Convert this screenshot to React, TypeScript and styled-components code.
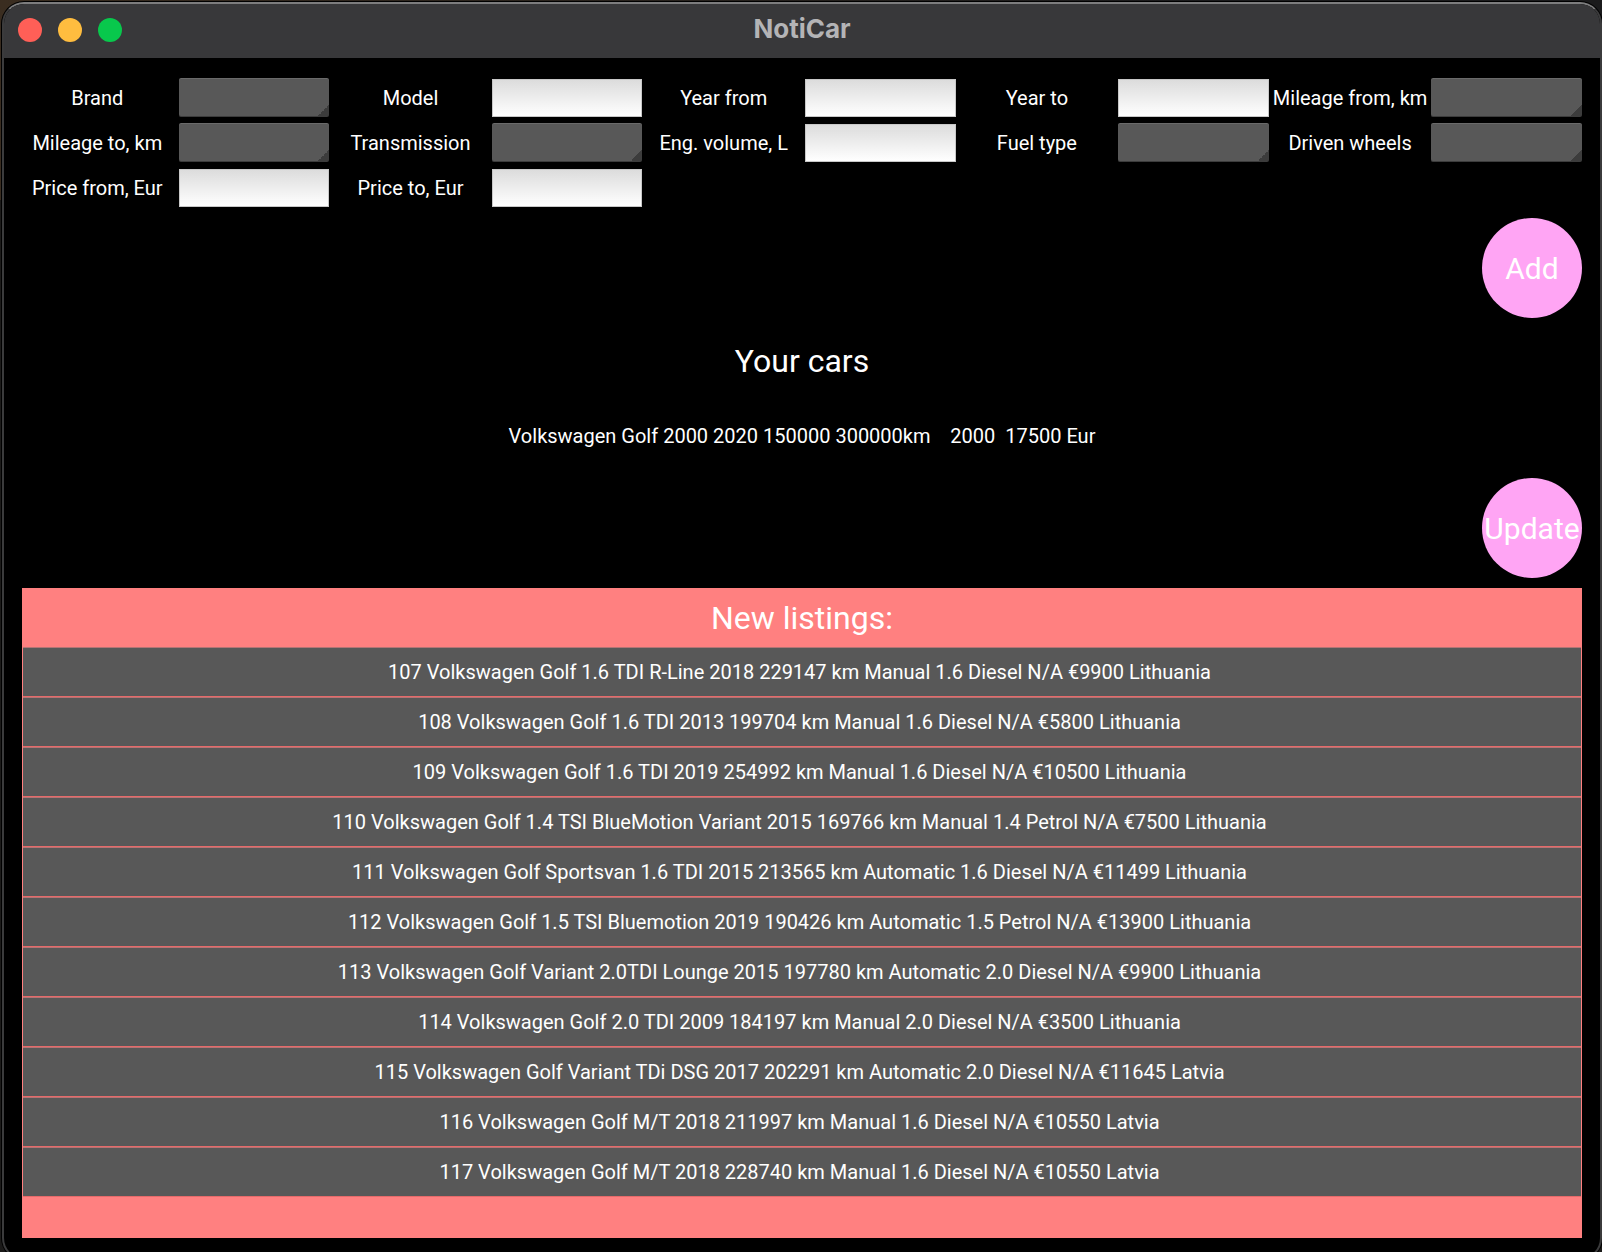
import React, { useId } from "react";
import styled, { createGlobalStyle } from "styled-components";

const GlobalStyle = createGlobalStyle`
  *, *::before, *::after { box-sizing: border-box; }
  body {
    margin: 0;
    background: #1b1a19;
    color: #fff;
    font-family: Roboto, "Liberation Sans", sans-serif;
    font-size: 20px;
    line-height: 24px;
  }
  button, input, select { font: inherit; color: inherit; }
`;

const Desktop = styled.div`
  min-height: 100vh;
  padding: 2px 0 0 2px;
  overflow: hidden;
  background: linear-gradient(90deg, #3a2d20 0, #2e261e 400px, #1b1b1c 1200px) top / 100% 200px no-repeat, #1b1a19;
`;

const AppWindow = styled.div`
  margin-bottom: -6px;
  min-height: calc(100vh + 4px);
  border: 2px solid #3b3b3c;
  border-top-color: #7d7d7e;
  border-radius: 22px;
  box-shadow: 0 0 0 1px #000;
  background: #000;
  overflow: hidden;
`;

const TitleBar = styled.header`
  display: grid;
  grid-template-columns: 1fr auto 1fr;
  align-items: center;
  height: 54px;
  padding: 0 14px 2px;
  background: #38383a;
`;

const WindowControls = styled.div`
  display: flex;
  gap: 16px;
`;

const WindowControl = styled.button<{ $color: string }>`
  width: 24px;
  height: 24px;
  padding: 0;
  border: 0;
  border-radius: 50%;
  background: ${(p) => p.$color};
`;

const AppTitle = styled.h1`
  margin: 0;
  padding-bottom: 2px;
  color: #b4b4b6;
  font-family: Inter, "Liberation Sans", sans-serif;
  font-size: 26px;
  font-weight: 700;
  line-height: 32px;
`;

const Content = styled.main`
  padding: 20px 18px;
`;

const SearchForm = styled.form`
  display: flex;
  flex-direction: column;
  gap: 11px;
`;

const Fields = styled.div`
  display: grid;
  grid-template-columns: repeat(5, minmax(0, 1fr));
  gap: 6px;
`;

const FieldRow = styled.div`
  display: grid;
  grid-template-columns: repeat(2, minmax(0, 1fr));
  gap: 6px;
  height: 39px;
`;

const FieldLabel = styled.label`
  display: flex;
  align-items: center;
  justify-content: center;
  white-space: nowrap;
`;

const TextBox = styled.input`
  width: 100%;
  min-width: 0;
  margin: 1px 0 0;
  padding: 0 8px;
  border: 1px solid #c8c8c8;
  border-radius: 0;
  background: linear-gradient(#dcdcdc, #fff);
  color: #000;
`;

const DropDown = styled.select`
  appearance: none;
  width: 100%;
  min-width: 0;
  padding: 0 8px;
  border: 0;
  border-radius: 2px;
  box-shadow: inset 0 1px #6a6a6a, inset 0 -1px #3c3c3c;
  background: linear-gradient(135deg, transparent 50%, #3c3c3c 50%) right bottom / 12px 12px no-repeat, #585858;
`;

const RoundButton = styled.button`
  display: flex;
  align-items: center;
  justify-content: center;
  align-self: flex-end;
  width: 100px;
  height: 100px;
  padding: 2px 0 0;
  border: 0;
  border-radius: 50%;
  background: #ffa5f4;
  font-size: 30px;
  line-height: 36px;
`;

const CarsSection = styled.section`
  display: flex;
  flex-direction: column;
  align-items: center;
  padding: 24px 0 10px;
`;

const SectionTitle = styled.h2`
  margin: 0;
  font-size: 32px;
  font-weight: 400;
  line-height: 38px;
  text-align: center;
`;

const CarList = styled.ul`
  margin: 0;
  padding: 44px 0 30px;
  list-style: none;
  white-space: pre;
`;

const Listings = styled.section`
  padding: 0 1px 41px;
  background: #ff8080;
`;

const ListingsHeader = styled.div`
  padding: 11px 0 10px;
`;

const ListingList = styled.ul`
  margin: 0;
  padding: 0;
  list-style: none;
`;

const Listing = styled.button`
  display: block;
  width: 100%;
  height: 50px;
  padding: 0;
  border: 0;
  border-top: 1px solid #b47474;
  border-bottom: 1px solid #e66a6a;
  background: #585858;
  text-align: center;
  white-space: pre;
`;

type Field = { label: string; kind: "select" | "text" };

const fields: Field[] = [
  { label: "Brand", kind: "select" },
  { label: "Model", kind: "text" },
  { label: "Year from", kind: "text" },
  { label: "Year to", kind: "text" },
  { label: "Mileage from, km", kind: "select" },
  { label: "Mileage to, km", kind: "select" },
  { label: "Transmission", kind: "select" },
  { label: "Eng. volume, L", kind: "text" },
  { label: "Fuel type", kind: "select" },
  { label: "Driven wheels", kind: "select" },
  { label: "Price from, Eur", kind: "text" },
  { label: "Price to, Eur", kind: "text" },
];

const cars = ["Volkswagen Golf 2000 2020 150000 300000km    2000  17500 Eur"];

// Each entry ends with the separator that follows every column.
const listings = [
  "107 Volkswagen Golf 1.6 TDI R-Line 2018 229147 km Manual 1.6 Diesel N/A €9900 Lithuania ",
  "108 Volkswagen Golf 1.6 TDI 2013 199704 km Manual 1.6 Diesel N/A €5800 Lithuania ",
  "109 Volkswagen Golf 1.6 TDI 2019 254992 km Manual 1.6 Diesel N/A €10500 Lithuania ",
  "110 Volkswagen Golf 1.4 TSI BlueMotion Variant 2015 169766 km Manual 1.4 Petrol N/A €7500 Lithuania ",
  "111 Volkswagen Golf Sportsvan 1.6 TDI 2015 213565 km Automatic 1.6 Diesel N/A €11499 Lithuania ",
  "112 Volkswagen Golf 1.5 TSI Bluemotion 2019 190426 km Automatic 1.5 Petrol N/A €13900 Lithuania ",
  "113 Volkswagen Golf Variant 2.0TDI Lounge 2015 197780 km Automatic 2.0 Diesel N/A €9900 Lithuania ",
  "114 Volkswagen Golf 2.0 TDI 2009 184197 km Manual 2.0 Diesel N/A €3500 Lithuania ",
  "115 Volkswagen Golf Variant TDi DSG 2017 202291 km Automatic 2.0 Diesel N/A €11645 Latvia ",
  "116 Volkswagen Golf M/T 2018 211997 km Manual 1.6 Diesel N/A €10550 Latvia ",
  "117 Volkswagen Golf M/T 2018 228740 km Manual 1.6 Diesel N/A €10550 Latvia ",
];

function SearchField({ label, kind }: Field) {
  const id = useId();
  return (
    <FieldRow>
      <FieldLabel htmlFor={id}>{label}</FieldLabel>
      {kind === "select" ? <DropDown id={id} /> : <TextBox id={id} type="text" />}
    </FieldRow>
  );
}

export default function App() {
  return (
    <Desktop>
      <GlobalStyle />
      <AppWindow>
        <TitleBar>
          <WindowControls>
            <WindowControl $color="#ff5f57" aria-label="Close" />
            <WindowControl $color="#ffbd3f" aria-label="Minimize" />
            <WindowControl $color="#08c84c" aria-label="Zoom" />
          </WindowControls>
          <AppTitle>NotiCar</AppTitle>
        </TitleBar>
        <Content>
          <SearchForm onSubmit={(e) => e.preventDefault()}>
            <Fields>
              {fields.map((f) => (
                <SearchField key={f.label} {...f} />
              ))}
            </Fields>
            <RoundButton type="submit">Add</RoundButton>
          </SearchForm>
          <CarsSection>
            <SectionTitle>Your cars</SectionTitle>
            <CarList>
              {cars.map((car) => (
                <li key={car}>{car}</li>
              ))}
            </CarList>
            <RoundButton type="button">Update</RoundButton>
          </CarsSection>
          <Listings>
            <ListingsHeader>
              <SectionTitle>New listings:</SectionTitle>
            </ListingsHeader>
            <ListingList>
              {listings.map((text) => (
                <li key={text}>
                  <Listing type="button">{text}</Listing>
                </li>
              ))}
            </ListingList>
          </Listings>
        </Content>
      </AppWindow>
    </Desktop>
  );
}
